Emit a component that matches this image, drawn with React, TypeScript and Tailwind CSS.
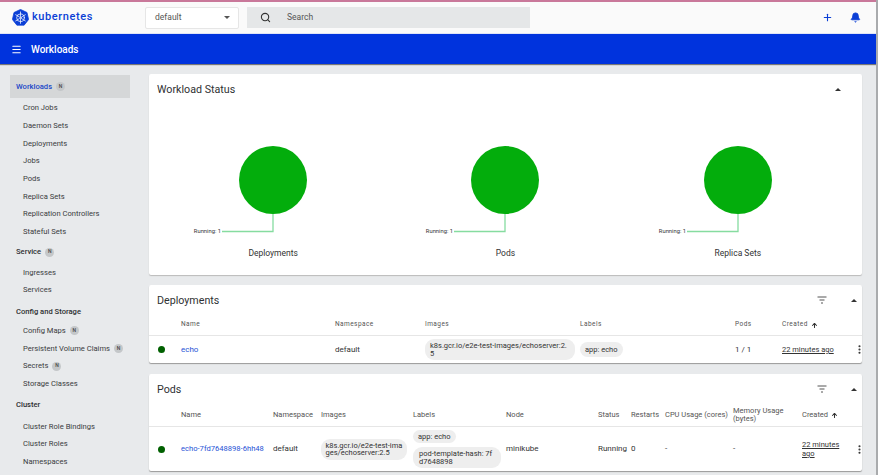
import React from 'react'
import { ArrowUp, Bell, Menu, MoreVertical, Plus, Search } from 'lucide-react'

const KubeLogo = () => (
  <svg viewBox="0 0 32 32" className="h-[17px] w-[17px]">
    <path d="M16 0.8 L28.2 6.6 L31.2 19.8 L22.8 30.4 L9.2 30.4 L0.8 19.8 L3.8 6.6 Z" fill="#0b3fd6" stroke="#0b3fd6" strokeWidth="1.5" strokeLinejoin="round" />
    <g stroke="#fff" strokeWidth="1.4" fill="none" strokeLinecap="round">
      <circle cx="16" cy="16.5" r="7.2" />
      <circle cx="16" cy="16.5" r="1.2" />
      <path d="M16 5.5 V14 M16 19 V27 M7 10.8 L14 15 M18 18 L25 22.4 M25 10.8 L18 15 M14 18 L7 22.4" />
    </g>
  </svg>
)

const Triangle = ({ className }: { className: string }) => (
  <span className={`inline-block h-0 w-0 border-x-[3px] border-x-transparent ${className}`} />
)

const UpCaret = () => <Triangle className="border-b-[3px] border-b-[#333]" />

const FilterIcon = () => (
  <svg viewBox="0 0 10 8" className="h-[8px] w-[10px]" fill="none" stroke="#555" strokeWidth="1">
    <path d="M0.5 1 H9.5 M2.5 4 H7.5 M4 7 H6" />
  </svg>
)

const N = () => (
  <span className="ml-[4px] inline-flex h-[9px] w-[9px] items-center justify-center rounded-full bg-[#c4c7c9] text-[5px] font-medium text-[#444]">N</span>
)

const Group = ({ label, badge, active, className = '' }: { label: string; badge?: boolean; active?: boolean; className?: string }) => (
  <div className={`flex items-center pl-[6px] text-[7.6px] font-medium ${active ? 'h-[23px] bg-[#d5d7d8] text-[#1a47c8]' : 'text-[#2d2f31]'} ${className}`}>
    {label}
    {badge && <N />}
  </div>
)

const Item = ({ label, badge }: { label: string; badge?: boolean }) => (
  <div className="flex h-[17.7px] items-center pl-[13px] text-[7.6px] text-[#3a3c3e]">
    {label}
    {badge && <N />}
  </div>
)

const Sidebar = () => (
  <aside className="w-[130px] shrink-0 pl-[10px] pt-[11px]">
    <Group label="Workloads" badge active />
    <div className="mt-[1px]">
      {['Cron Jobs', 'Daemon Sets', 'Deployments', 'Jobs', 'Pods', 'Replica Sets', 'Replication Controllers', 'Stateful Sets'].map(x => (
        <Item key={x} label={x} />
      ))}
    </div>
    <Group label="Service" badge className="mt-[3px] h-[17px]" />
    <div className="mt-[3px]">
      <Item label="Ingresses" />
      <Item label="Services" />
    </div>
    <Group label="Config and Storage" className="mt-[4px] h-[17px]" />
    <div className="mt-[2px]">
      <Item label="Config Maps" badge />
      <Item label="Persistent Volume Claims" badge />
      <Item label="Secrets" badge />
      <Item label="Storage Classes" />
    </div>
    <Group label="Cluster" className="mt-[4px] h-[17px]" />
    <div className="mt-[4px]">
      <Item label="Cluster Role Bindings" />
      <Item label="Cluster Roles" />
      <Item label="Namespaces" />
    </div>
  </aside>
)

const Donut = ({ title }: { title: string }) => (
  <div className="flex flex-col items-center">
    <svg width="232" height="102" viewBox="0 0 232 102">
      <circle cx="116" cy="35" r="34" fill="#03ad0c" />
      <path d="M116 69 V86.5 H65" fill="none" stroke="#86dca0" strokeWidth="1.3" />
      <text x="64" y="88" textAnchor="end" fontSize="5.8" fill="#333">Running: 1</text>
    </svg>
    <div className="text-[8.5px] text-[#333]">{title}</div>
  </div>
)

const Chip = ({ children, className = '' }: { children: React.ReactNode; className?: string }) => (
  <span className={`block rounded-[9px] bg-[#eeeeee] py-[3px] text-[7.5px] leading-[7.5px] text-[#333] break-all ${className}`}>{children}</span>
)

const CardHead = ({ title }: { title: string }) => (
  <div className="flex h-[30px] items-center pl-[8px] pr-[5px]">
    <h2 className="flex-1 pt-[2px] text-[10.7px] text-[#2f3133]">{title}</h2>
    <FilterIcon />
    <span className="ml-[24px] flex"><UpCaret /></span>
  </div>
)

const CreatedHead = () => (
  <span className="flex items-center gap-[3px]">
    Created <ArrowUp size={7} strokeWidth={3.5} color="#333" />
  </span>
)

const Kebab = () => (
  <span className="flex justify-center"><MoreVertical size={11} strokeWidth={2.6} color="#333" /></span>
)

const depCols = 'grid-cols-[32px_154px_90px_155px_155px_47px_72px_1fr]'
const podCols = 'grid-cols-[32px_92px_48px_92px_93px_92px_33px_34px_68px_69px_52px_1fr]'

const Deployments = () => (
  <section className="mt-[10px] rounded-[2px] bg-white shadow-[0_1px_1px_#9a9a9a]">
    <CardHead title="Deployments" />
    <div className={`grid h-[21px] items-center border-b border-[#e6e6e6] text-[6.5px] tracking-[0.45px] text-[#555] ${depCols}`}>
      <span />
      <span>Name</span>
      <span>Namespace</span>
      <span>Images</span>
      <span>Labels</span>
      <span>Pods</span>
      <CreatedHead />
      <span />
    </div>
    <div className={`grid h-[27px] items-center text-[8px] text-[#333] ${depCols}`}>
      <span className="ml-[9px] h-[7px] w-[7px] rounded-full bg-[#006000]" />
      <span className="text-[#1f53d6]">echo</span>
      <span>default</span>
      <span><Chip className="w-[150px] px-[5px]">k8s.gcr.io/e2e-test-images/echoserver:2.5</Chip></span>
      <span><Chip className="w-fit px-[5px] py-[4px]">app: echo</Chip></span>
      <span>1 / 1</span>
      <span className="whitespace-nowrap text-[7.5px] underline">22 minutes ago</span>
      <Kebab />
    </div>
  </section>
)

const Pods = () => (
  <section className="mt-[11px] rounded-[2px] bg-white shadow-[0_1px_1px_#9a9a9a]">
    <CardHead title="Pods" />
    <div className={`grid h-[23px] items-center border-b border-[#e6e6e6] text-[7.5px] leading-[8.5px] text-[#555] ${podCols}`}>
      <span />
      <span>Name</span>
      <span>Namespace</span>
      <span>Images</span>
      <span>Labels</span>
      <span>Node</span>
      <span>Status</span>
      <span>Restarts</span>
      <span className="whitespace-nowrap">CPU Usage (cores)</span>
      <span>Memory Usage (bytes)</span>
      <CreatedHead />
      <span />
    </div>
    <div className={`grid h-[44px] items-center text-[8px] text-[#333] ${podCols}`}>
      <span className="ml-[9px] h-[7px] w-[7px] rounded-full bg-[#006000]" />
      <span className="whitespace-nowrap text-[7.6px] text-[#1f53d6]">echo-7fd7648898-6hh48</span>
      <span>default</span>
      <span><Chip className="w-[86px] px-[4.5px]">k8s.gcr.io/e2e-test-images/echoserver:2.5</Chip></span>
      <span className="flex flex-col items-start gap-[4px]">
        <Chip className="w-fit px-[5px]">app: echo</Chip>
        <Chip className="w-[88px] px-[6px]">pod-template-hash: 7fd7648898</Chip>
      </span>
      <span>minikube</span>
      <span>Running</span>
      <span>0</span>
      <span>-</span>
      <span>-</span>
      <span className="w-[44px] text-[7.5px] leading-[9px] underline">22 minutes ago</span>
      <Kebab />
    </div>
  </section>
)

export default function App() {
  return (
    <div className="flex h-[475px] w-[878px] flex-col overflow-hidden border-r-[2px] border-r-[#a9abad] bg-[#e8eaec] font-['Roboto',sans-serif]">
      <div className="h-[2px] shrink-0 bg-[#c9789a]" />
      <header className="flex h-[31px] shrink-0 items-center bg-[#fafafa]">
        <div className="flex w-[145px] items-center gap-[3px] pl-[12px]">
          <KubeLogo />
          <span className="text-[11px] font-medium tracking-[0.6px] text-[#0b3fd6]">kubernetes</span>
        </div>
        <div className="flex h-[22px] w-[94px] items-center justify-between rounded-[2px] border border-[#e6e6e6] bg-white pl-[9px] pr-[8px] text-[8.5px] text-[#555]">
          default
          <Triangle className="border-t-[3px] border-t-[#555]" />
        </div>
        <div className="ml-[8px] flex h-[21px] w-[283px] items-center bg-[#e5e7e8] pl-[13px] text-[8.5px] text-[#555]">
          <Search size={11} strokeWidth={2.4} color="#333" />
          <span className="ml-[16px]">Search</span>
        </div>
        <div className="flex flex-1 items-center justify-end">
          <Plus size={11} strokeWidth={2.4} color="#0b3fd6" />
          <Bell size={11} fill="#0b3fd6" color="#0b3fd6" className="ml-[17px] mr-[15px]" />
        </div>
      </header>
      <div className="flex h-[31px] shrink-0 items-center border-t border-[#dfe4f7] bg-[#0033dd] pl-[11px] text-white shadow-[0_1px_1px_#777]">
        <Menu size={11} strokeWidth={2.4} />
        <span className="ml-[9px] text-[10px] font-medium">Workloads</span>
      </div>
      <div className="flex min-h-0 flex-1">
        <Sidebar />
        <main className="ml-[19px] w-[713px] pt-[10px]">
          <section className="h-[201px] rounded-[2px] bg-white shadow-[0_1px_1px_#bbb]">
            <div className="flex h-[30px] items-center pl-[8px] pr-[21px]">
              <h2 className="flex-1 pt-[2px] text-[10.7px] text-[#2f3133]">Workload Status</h2>
              <UpCaret />
            </div>
            <div className="mt-[41px] grid grid-cols-3 px-[8px]">
              <Donut title="Deployments" />
              <Donut title="Pods" />
              <Donut title="Replica Sets" />
            </div>
          </section>
          <Deployments />
          <Pods />
        </main>
      </div>
    </div>
  )
}
